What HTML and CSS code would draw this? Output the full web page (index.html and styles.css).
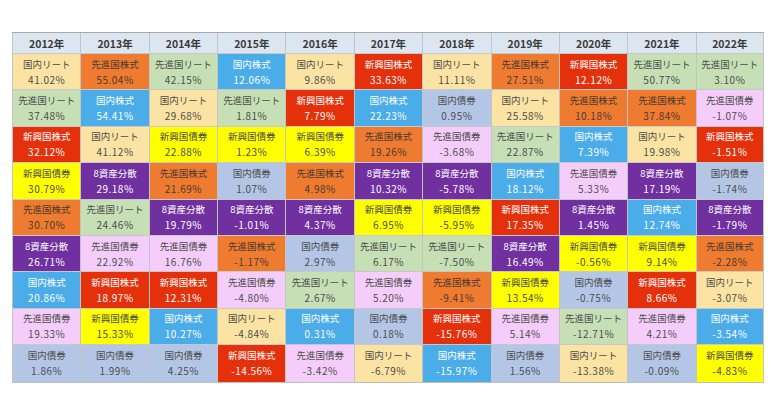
FILE: index.html
```html
<!DOCTYPE html>
<html lang="ja">
<head>
<meta charset="utf-8">
<link rel="stylesheet" href="styles.css">
</head>
<body>
<div class="table">
  <div class="col">
    <div class="hd">2012年</div>
    <div class="c jr"><span>国内リート</span><span>41.02%</span></div>
    <div class="c fr"><span>先進国リート</span><span>37.48%</span></div>
    <div class="c es"><span>新興国株式</span><span>32.12%</span></div>
    <div class="c eb"><span>新興国債券</span><span>30.79%</span></div>
    <div class="c fs"><span>先進国株式</span><span>30.70%</span></div>
    <div class="c ma"><span>8資産分散</span><span>26.71%</span></div>
    <div class="c js"><span>国内株式</span><span>20.86%</span></div>
    <div class="c fb"><span>先進国債券</span><span>19.33%</span></div>
    <div class="c jb"><span>国内債券</span><span>1.86%</span></div>
  </div>
  <div class="col">
    <div class="hd">2013年</div>
    <div class="c fs"><span>先進国株式</span><span>55.04%</span></div>
    <div class="c js"><span>国内株式</span><span>54.41%</span></div>
    <div class="c jr"><span>国内リート</span><span>41.12%</span></div>
    <div class="c ma"><span>8資産分散</span><span>29.18%</span></div>
    <div class="c fr"><span>先進国リート</span><span>24.46%</span></div>
    <div class="c fb"><span>先進国債券</span><span>22.92%</span></div>
    <div class="c es"><span>新興国株式</span><span>18.97%</span></div>
    <div class="c eb"><span>新興国債券</span><span>15.33%</span></div>
    <div class="c jb"><span>国内債券</span><span>1.99%</span></div>
  </div>
  <div class="col">
    <div class="hd">2014年</div>
    <div class="c fr"><span>先進国リート</span><span>42.15%</span></div>
    <div class="c jr"><span>国内リート</span><span>29.68%</span></div>
    <div class="c eb"><span>新興国債券</span><span>22.88%</span></div>
    <div class="c fs"><span>先進国株式</span><span>21.69%</span></div>
    <div class="c ma"><span>8資産分散</span><span>19.79%</span></div>
    <div class="c fb"><span>先進国債券</span><span>16.76%</span></div>
    <div class="c es"><span>新興国株式</span><span>12.31%</span></div>
    <div class="c js"><span>国内株式</span><span>10.27%</span></div>
    <div class="c jb"><span>国内債券</span><span>4.25%</span></div>
  </div>
  <div class="col">
    <div class="hd">2015年</div>
    <div class="c js"><span>国内株式</span><span>12.06%</span></div>
    <div class="c fr"><span>先進国リート</span><span>1.81%</span></div>
    <div class="c eb"><span>新興国債券</span><span>1.23%</span></div>
    <div class="c jb"><span>国内債券</span><span>1.07%</span></div>
    <div class="c ma"><span>8資産分散</span><span>-1.01%</span></div>
    <div class="c fs"><span>先進国株式</span><span>-1.17%</span></div>
    <div class="c fb"><span>先進国債券</span><span>-4.80%</span></div>
    <div class="c jr"><span>国内リート</span><span>-4.84%</span></div>
    <div class="c es"><span>新興国株式</span><span>-14.56%</span></div>
  </div>
  <div class="col">
    <div class="hd">2016年</div>
    <div class="c jr"><span>国内リート</span><span>9.86%</span></div>
    <div class="c es"><span>新興国株式</span><span>7.79%</span></div>
    <div class="c eb"><span>新興国債券</span><span>6.39%</span></div>
    <div class="c fs"><span>先進国株式</span><span>4.98%</span></div>
    <div class="c ma"><span>8資産分散</span><span>4.37%</span></div>
    <div class="c jb"><span>国内債券</span><span>2.97%</span></div>
    <div class="c fr"><span>先進国リート</span><span>2.67%</span></div>
    <div class="c js"><span>国内株式</span><span>0.31%</span></div>
    <div class="c fb"><span>先進国債券</span><span>-3.42%</span></div>
  </div>
  <div class="col">
    <div class="hd">2017年</div>
    <div class="c es"><span>新興国株式</span><span>33.63%</span></div>
    <div class="c js"><span>国内株式</span><span>22.23%</span></div>
    <div class="c fs"><span>先進国株式</span><span>19.26%</span></div>
    <div class="c ma"><span>8資産分散</span><span>10.32%</span></div>
    <div class="c eb"><span>新興国債券</span><span>6.95%</span></div>
    <div class="c fr"><span>先進国リート</span><span>6.17%</span></div>
    <div class="c fb"><span>先進国債券</span><span>5.20%</span></div>
    <div class="c jb"><span>国内債券</span><span>0.18%</span></div>
    <div class="c jr"><span>国内リート</span><span>-6.79%</span></div>
  </div>
  <div class="col">
    <div class="hd">2018年</div>
    <div class="c jr"><span>国内リート</span><span>11.11%</span></div>
    <div class="c jb"><span>国内債券</span><span>0.95%</span></div>
    <div class="c fb"><span>先進国債券</span><span>-3.68%</span></div>
    <div class="c ma"><span>8資産分散</span><span>-5.78%</span></div>
    <div class="c eb"><span>新興国債券</span><span>-5.95%</span></div>
    <div class="c fr"><span>先進国リート</span><span>-7.50%</span></div>
    <div class="c fs"><span>先進国株式</span><span>-9.41%</span></div>
    <div class="c es"><span>新興国株式</span><span>-15.76%</span></div>
    <div class="c js"><span>国内株式</span><span>-15.97%</span></div>
  </div>
  <div class="col">
    <div class="hd">2019年</div>
    <div class="c fs"><span>先進国株式</span><span>27.51%</span></div>
    <div class="c jr"><span>国内リート</span><span>25.58%</span></div>
    <div class="c fr"><span>先進国リート</span><span>22.87%</span></div>
    <div class="c js"><span>国内株式</span><span>18.12%</span></div>
    <div class="c es"><span>新興国株式</span><span>17.35%</span></div>
    <div class="c ma"><span>8資産分散</span><span>16.49%</span></div>
    <div class="c eb"><span>新興国債券</span><span>13.54%</span></div>
    <div class="c fb"><span>先進国債券</span><span>5.14%</span></div>
    <div class="c jb"><span>国内債券</span><span>1.56%</span></div>
  </div>
  <div class="col">
    <div class="hd">2020年</div>
    <div class="c es"><span>新興国株式</span><span>12.12%</span></div>
    <div class="c fs"><span>先進国株式</span><span>10.18%</span></div>
    <div class="c js"><span>国内株式</span><span>7.39%</span></div>
    <div class="c fb"><span>先進国債券</span><span>5.33%</span></div>
    <div class="c ma"><span>8資産分散</span><span>1.45%</span></div>
    <div class="c eb"><span>新興国債券</span><span>-0.56%</span></div>
    <div class="c jb"><span>国内債券</span><span>-0.75%</span></div>
    <div class="c fr"><span>先進国リート</span><span>-12.71%</span></div>
    <div class="c jr"><span>国内リート</span><span>-13.38%</span></div>
  </div>
  <div class="col">
    <div class="hd">2021年</div>
    <div class="c fr"><span>先進国リート</span><span>50.77%</span></div>
    <div class="c fs"><span>先進国株式</span><span>37.84%</span></div>
    <div class="c jr"><span>国内リート</span><span>19.98%</span></div>
    <div class="c ma"><span>8資産分散</span><span>17.19%</span></div>
    <div class="c js"><span>国内株式</span><span>12.74%</span></div>
    <div class="c eb"><span>新興国債券</span><span>9.14%</span></div>
    <div class="c es"><span>新興国株式</span><span>8.66%</span></div>
    <div class="c fb"><span>先進国債券</span><span>4.21%</span></div>
    <div class="c jb"><span>国内債券</span><span>-0.09%</span></div>
  </div>
  <div class="col">
    <div class="hd">2022年</div>
    <div class="c fr"><span>先進国リート</span><span>3.10%</span></div>
    <div class="c fb"><span>先進国債券</span><span>-1.07%</span></div>
    <div class="c es"><span>新興国株式</span><span>-1.51%</span></div>
    <div class="c jb"><span>国内債券</span><span>-1.74%</span></div>
    <div class="c ma"><span>8資産分散</span><span>-1.79%</span></div>
    <div class="c fs"><span>先進国株式</span><span>-2.28%</span></div>
    <div class="c jr"><span>国内リート</span><span>-3.07%</span></div>
    <div class="c js"><span>国内株式</span><span>-3.54%</span></div>
    <div class="c eb"><span>新興国債券</span><span>-4.83%</span></div>
  </div>
</div>
</body>
</html>
```
FILE: styles.css
```css
html, body {
  margin: 0;
  padding: 0;
  background: #ffffff;
}
body {
  padding: 32px 0 0 12px;
  font-family: "Noto Sans CJK JP", "Noto Sans", sans-serif;
  color: #4d4d4d;
}
.table {
  display: grid;
  grid-template-columns: repeat(11, 1fr);
  width: 752px;
  border-top: 1px solid #a8a8a8;
  border-bottom: 1px solid #c0c0c0;
  box-sizing: border-box;
}
.col {
  display: grid;
  grid-template-rows: 21px repeat(9, 36.4px);
  border-left: 1px solid #c4c4c4;
}
.col:last-child {
  border-right: 1px solid #c4c4c4;
}
.hd {
  background: #dce6f1;
  font-weight: bold;
  font-size: 10.5px;
  color: #3a3a3a;
  display: flex;
  align-items: center;
  justify-content: center;
  border-bottom: 1px solid #c8c8c8;
}
.c {
  display: flex;
  flex-direction: column;
  align-items: center;
  justify-content: center;
  font-size: 9.5px;
  line-height: 15px;
  border-bottom: 1px solid #c8c8c8;
  box-sizing: border-box;
}
.c span:last-child {
  font-size: 10px;
  letter-spacing: 0.5px;
}
.col .c:last-child {
  border-bottom: none;
}
.jr { background: #fbe4a3; }
.fs { background: #ee7b30; color: #4a3a30; }
.fr { background: #c6dfb5; }
.js { background: #4aace8; color: #ffffff; }
.es { background: #e5300c; color: #ffffff; }
.eb { background: #ffff00; }
.jb { background: #b4c6e6; }
.fb { background: #f5cdfa; }
.ma { background: #7030a0; color: #ffffff; }
```
